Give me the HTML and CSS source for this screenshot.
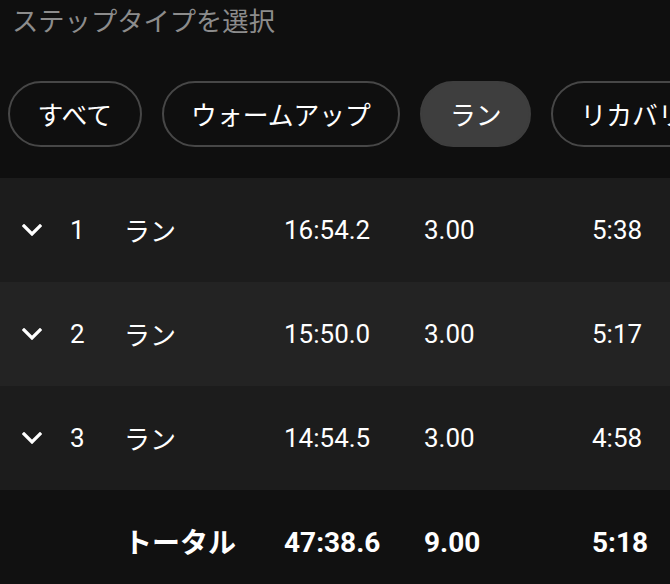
FILE: index.html
```html
<!DOCTYPE html>
<html lang="ja">
<head>
    <meta charset="UTF-8">
    <meta name="viewport" content="width=device-width, initial-scale=1">
    <title>ステップタイプを選択</title>
    <link rel="stylesheet" href="styles.css">
</head>
<body>
    <div class="title">ステップタイプを選択</div>
    <div class="chips">
        <span class="chip">すべて</span>
        <span class="chip">ウォームアップ</span>
        <span class="chip active">ラン</span>
        <span class="chip">リカバリー</span>
        <span class="chip">クールダウン</span>
    </div>
    <div class="laps">
        <div class="row">
            <div class="cell icon"><svg width="20" height="12" viewBox="0 0 20 12"><polyline points="2,2 10,10 18,2"/></svg></div>
            <div class="cell num">1</div>
            <div class="cell jp">ラン</div>
            <div class="cell num">16:54.2</div>
            <div class="cell num">3.00</div>
            <div class="cell num">5:38</div>
        </div>
        <div class="row alt">
            <div class="cell icon"><svg width="20" height="12" viewBox="0 0 20 12"><polyline points="2,2 10,10 18,2"/></svg></div>
            <div class="cell num">2</div>
            <div class="cell jp">ラン</div>
            <div class="cell num">15:50.0</div>
            <div class="cell num">3.00</div>
            <div class="cell num">5:17</div>
        </div>
        <div class="row">
            <div class="cell icon"><svg width="20" height="12" viewBox="0 0 20 12"><polyline points="2,2 10,10 18,2"/></svg></div>
            <div class="cell num">3</div>
            <div class="cell jp">ラン</div>
            <div class="cell num">14:54.5</div>
            <div class="cell num">3.00</div>
            <div class="cell num">4:58</div>
        </div>
        <div class="row total">
            <div class="cell"></div>
            <div class="cell"></div>
            <div class="cell jp">トータル</div>
            <div class="cell num">47:38.6</div>
            <div class="cell num">9.00</div>
            <div class="cell num">5:18</div>
        </div>
    </div>
</body>
</html>
```

FILE: styles.css
```css
*{
    margin: 0;
    padding: 0;
    box-sizing: border-box;
}
html, body{
    height: 100%;
    overflow: hidden;
}
body{
    background-color: #0f0f0f;
    color: #ffffff;
    font-family: "Noto Sans CJK JP", Roboto, sans-serif;
}
.title{
    padding: 0 12px;
    height: 56px;
    line-height: 40px;
    font-size: 26.3px;
    color: #8c8c8c;
}
.chips{
    display: flex;
    gap: 20px;
    padding: 25px 8px 31px;
    white-space: nowrap;
    overflow: hidden;
}
.chip{
    flex: none;
    height: 66px;
    line-height: 62px;
    padding: 0 27.5px;
    border: 2px solid #474747;
    border-radius: 33px;
    font-size: 25.8px;
}
.chip.active{
    background-color: #3e3e3e;
    border-color: #3e3e3e;
}
.row{
    display: grid;
    grid-template-columns: 70px 56px 158px 140px 168px 1fr;
    align-items: center;
    height: 104px;
    background-color: #1c1c1c;
    font-size: 26px;
}
.row.alt{
    background-color: #232323;
}
.row.total{
    background-color: #111111;
    font-weight: bold;
    font-size: 28px;
}
.cell.jp{
    margin-left: -2px;
    margin-bottom: 2px;
}
.cell.num{
    font-family: Roboto, "Noto Sans CJK JP", sans-serif;
}
.cell.icon{
    padding-left: 22px;
    display: flex;
    align-items: center;
}
.cell.icon polyline{
    fill: none;
    stroke: #ffffff;
    stroke-width: 3.2;
    stroke-linecap: square;
}
```
